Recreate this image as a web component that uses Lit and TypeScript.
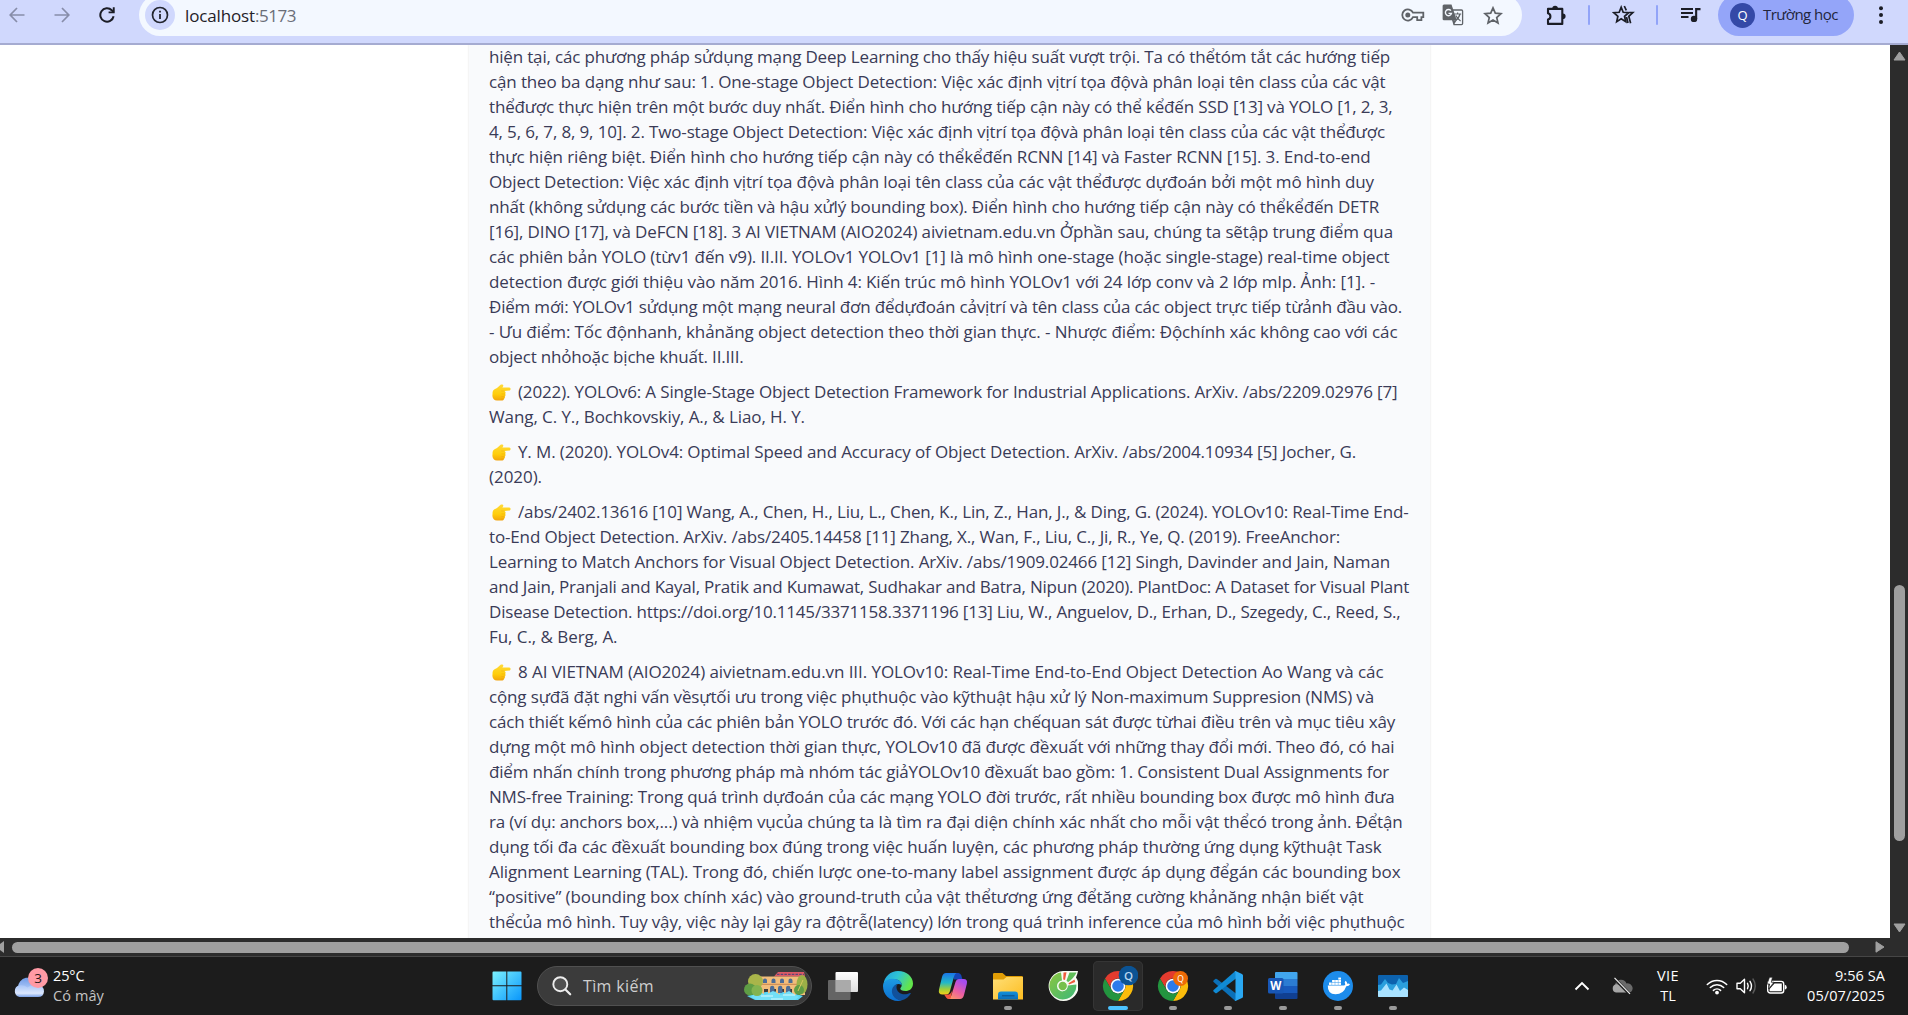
import { LitElement, html, svg, css } from "lit";
import { customElement, property } from "lit/decorators.js";

/** One line of text whose tracking is adjusted so that it spans a given width. */
@customElement("fit-text")
class FitText extends LitElement {
  @property() text = "";
  @property({ type: Number }) w = 0;
  static styles = css`
    :host { display: block; white-space: pre; }
    span { display: inline-block; }
  `;
  render() {
    return html`<span>${this.text}</span>`;
  }
  updated() {
    const el = this.renderRoot.querySelector("span") as HTMLElement;
    el.style.letterSpacing = "0px";
    const natural = el.getBoundingClientRect().width;
    if (this.w && natural) {
      el.style.letterSpacing = `${(this.w - natural) / [...this.text].length}px`;
    }
  }
}

type Line = [string, number];
const LEFT = 489.5;

/** Each line carries the x coordinate at which it ends. */
const paragraphs: { pointer: boolean; lines: Line[] }[] = [
  {
    pointer: false,
    lines: [
      ["hiện tại, các phương pháp sửdụng mạng Deep Learning cho thấy hiệu suất vượt trội. Ta có thểtóm tắt các hướng tiếp", 1390.5],
      ["cận theo ba dạng như sau: 1. One-stage Object Detection: Việc xác định vịtrí tọa độvà phân loại tên class của các vật", 1386],
      ["thểđược thực hiện trên một bước duy nhất. Điển hình cho hướng tiếp cận này có thể kểđến SSD [13] và YOLO [1, 2, 3,", 1393],
      ["4, 5, 6, 7, 8, 9, 10]. 2. Two-stage Object Detection: Việc xác định vịtrí tọa độvà phân loại tên class của các vật thểđược", 1385.5],
      ["thực hiện riêng biệt. Điển hình cho hướng tiếp cận này có thểkểđến RCNN [14] và Faster RCNN [15]. 3. End-to-end", 1371],
      ["Object Detection: Việc xác định vịtrí tọa độvà phân loại tên class của các vật thểđược dựđoán bởi một mô hình duy", 1374.5],
      ["nhất (không sửdụng các bước tiền và hậu xửlý bounding box). Điển hình cho hướng tiếp cận này có thểkểđến DETR", 1379.5],
      ["[16], DINO [17], và DeFCN [18]. 3 AI VIETNAM (AIO2024) aivietnam.edu.vn Ởphần sau, chúng ta sẽtập trung điểm qua", 1393.5],
      ["các phiên bản YOLO (từv1 đến v9). II.II. YOLOv1 YOLOv1 [1] là mô hình one-stage (hoặc single-stage) real-time object", 1390],
      ["detection được giới thiệu vào năm 2016. Hình 4: Kiến trúc mô hình YOLOv1 với 24 lớp conv và 2 lớp mlp. Ảnh: [1]. -", 1375.5],
      ["Điểm mới: YOLOv1 sửdụng một mạng neural đơn đểdựđoán cảvịtrí và tên class của các object trực tiếp từảnh đầu vào.", 1402.5],
      ["- Ưu điểm: Tốc độnhanh, khảnăng object detection theo thời gian thực. - Nhược điểm: Độchính xác không cao với các", 1398],
      ["object nhỏhoặc bịche khuất. II.III.", 744],
    ],
  },
  {
    pointer: true,
    lines: [
      ["(2022). YOLOv6: A Single-Stage Object Detection Framework for Industrial Applications. ArXiv. /abs/2209.02976 [7]", 1398],
      ["Wang, C. Y., Bochkovskiy, A., & Liao, H. Y.", 805.5],
    ],
  },
  {
    pointer: true,
    lines: [
      ["Y. M. (2020). YOLOv4: Optimal Speed and Accuracy of Object Detection. ArXiv. /abs/2004.10934 [5] Jocher, G.", 1356.5],
      ["(2020).", 542.5],
    ],
  },
  {
    pointer: true,
    lines: [
      ["/abs/2402.13616 [10] Wang, A., Chen, H., Liu, L., Chen, K., Lin, Z., Han, J., & Ding, G. (2024). YOLOv10: Real-Time End-", 1409],
      ["to-End Object Detection. ArXiv. /abs/2405.14458 [11] Zhang, X., Wan, F., Liu, C., Ji, R., Ye, Q. (2019). FreeAnchor:", 1340.5],
      ["Learning to Match Anchors for Visual Object Detection. ArXiv. /abs/1909.02466 [12] Singh, Davinder and Jain, Naman", 1390.5],
      ["and Jain, Pranjali and Kayal, Pratik and Kumawat, Sudhakar and Batra, Nipun (2020). PlantDoc: A Dataset for Visual Plant", 1409.5],
      ["Disease Detection. https://doi.org/10.1145/3371158.3371196 [13] Liu, W., Anguelov, D., Erhan, D., Szegedy, C., Reed, S.,", 1401],
      ["Fu, C., & Berg, A.", 618],
    ],
  },
  {
    pointer: true,
    lines: [
      ["8 AI VIETNAM (AIO2024) aivietnam.edu.vn III. YOLOv10: Real-Time End-to-End Object Detection Ao Wang và các", 1384],
      ["cộng sựđã đặt nghi vấn vềsựtối ưu trong việc phụthuộc vào kỹthuật hậu xử lý Non-maximum Suppresion (NMS) và", 1374.5],
      ["cách thiết kếmô hình của các phiên bản YOLO trước đó. Với các hạn chếquan sát được từhai điều trên và mục tiêu xây", 1395.5],
      ["dựng một mô hình object detection thời gian thực, YOLOv10 đã được đềxuất với những thay đổi mới. Theo đó, có hai", 1395],
      ["điểm nhấn chính trong phương pháp mà nhóm tác giảYOLOv10 đềxuất bao gồm: 1. Consistent Dual Assignments for", 1389.5],
      ["NMS-free Training: Trong quá trình dựđoán của các mạng YOLO đời trước, rất nhiều bounding box được mô hình đưa", 1395],
      ["ra (ví dụ: anchors box,...) và nhiệm vụcủa chúng ta là tìm ra đại diện chính xác nhất cho mỗi vật thểcó trong ảnh. Đểtận", 1403],
      ["dụng tối đa các đềxuất bounding box đúng trong việc huấn luyện, các phương pháp thường ứng dụng kỹthuật Task", 1382],
      ["Alignment Learning (TAL). Trong đó, chiến lược one-to-many label assignment được áp dụng đểgán các bounding box", 1401],
      ["“positive” (bounding box chính xác) vào ground-truth của vật thểtương ứng đểtăng cường khảnăng nhận biết vật", 1364],
      ["thểcủa mô hình. Tuy vậy, việc này lại gây ra độtrễ(latency) lớn trong quá trình inference của mô hình bởi việc phụthuộc", 1405],
    ],
  },
];

const hand = html`<svg class="hand" width="19" height="17" viewBox="0 0 19 17">
  <defs><linearGradient id="hg" x1="0" y1="0" x2="0" y2="1">
    <stop offset="0" stop-color="#ffd93a" /><stop offset=".6" stop-color="#ffce0b" /><stop offset="1" stop-color="#f3a40c" />
  </linearGradient></defs>
  <path fill="url(#hg)" d="M.6 8C1 5.700 3 4.800 5 3.900L8.600.8C9.500.1 11.600.4 11.300 1.900L10.400 3.400 17.300 3.500C19 3.600 19 6.500 17.300 6.600L12.500 6.900C13.800 7.600 13.900 9.200 13.100 9.800 13.800 10.700 13.500 12 12.700 12.500 13.200 13.500 12.700 14.600 11.900 14.900 11.800 16.200 10.800 16.600 9.600 16.600H5C2.200 16.600.6 14.500.4 12Z" />
  <path fill="none" stroke="#e79a08" stroke-width=".7" d="M9.200 7H12.500M9.400 9.900H13M9.200 12.600H12.600M8.900 15H11.800" opacity=".5" />
</svg>`;

const backIcon = html`<svg width="16" height="16" viewBox="0 0 16 16"><path d="M15.500 8H1.500M8 1 1.200 8 8 15" fill="none" stroke="#878da9" stroke-width="1.700" /></svg>`;
const forwardIcon = html`<svg width="16" height="16" viewBox="0 0 16 16"><path d="M.5 8H14.500M8 1 14.800 8 8 15" fill="none" stroke="#878da9" stroke-width="1.700" /></svg>`;
const reloadIcon = html`<svg width="16" height="16" viewBox="0 0 16 16"><path d="M14.600 9.300A6.700 6.700 0 1 1 12.800 3.300L14.600 5" fill="none" stroke="#1b1d26" stroke-width="2" /><path d="M15.700.3V6.300H9.600V4.500H13.800V.3Z" fill="#1b1d26" /></svg>`;
const infoIcon = html`<svg width="18" height="18" viewBox="0 0 18 18"><circle cx="9" cy="9" r="7.500" fill="none" stroke="#22252e" stroke-width="1.700" /><path d="M9 7.900V13M9 4.800V6.500" stroke="#22252e" stroke-width="1.800" /></svg>`;
const keyIcon = html`<svg width="24" height="14" viewBox="0 0 24 14"><g fill="none" stroke="#5f6368" stroke-width="1.800"><path d="M12 4.700H22.300V9.200H20.400V12.100H16.200V9.200H12A5.600 5.600 0 1 1 12 4.700Z" /></g><circle cx="6.800" cy="7" r="2.500" fill="#5f6368" /></svg>`;
const translateIcon = html`<svg width="22" height="22" viewBox="0 0 22 22">
  <path d="M8 6H19.500Q20.600 6 20.600 7V19.500Q20.600 20.600 19.500 20.600H12Z" fill="#f3f8ff" stroke="#5f6368" stroke-width="1.300" />
  <path d="M2 .5H9.500L14.800 16.300H2Q.6 16.300.6 15V2Q.6.500 2 .5Z" fill="#5f6368" />
  <path d="M10.500 16.300H14.800L12 20.600Z" fill="#5f6368" />
  <path d="M8.900 6.600A3.100 3.100 0 1 0 9.500 9.400H6.500" fill="none" stroke="#f3f8ff" stroke-width="1.400" />
  <path d="M12.300 10H19.200M15.600 8.500V10M18 10Q17 14.300 13.500 16.500M13.800 11.500Q15.500 15 18.600 17" fill="none" stroke="#5f6368" stroke-width="1.200" />
</svg>`;
const starIcon = html`<svg width="20" height="19" viewBox="0 0 20 19"><path d="M10 1.900 12.300 7.200 18 7.700 13.700 11.500 15 17.100 10 14.100 5 17.100 6.300 11.500 2 7.700 7.700 7.200Z" fill="none" stroke="#5f6368" stroke-width="1.700" /></svg>`;
const puzzleIcon = html`<svg width="21" height="21" viewBox="0 0 21 21"><path d="M2 3.900H16.300V18.900H2V14.500A3.200 3.200 0 0 0 2 8.300Z" fill="none" stroke="#1b1d26" stroke-width="2.100" stroke-linejoin="round" /><path d="M6.300 3.500A2.800 2.800 0 0 1 11.900 3.500ZM16.800 8.500A2.800 2.800 0 0 1 16.800 14.100Z" fill="#1b1d26" /></svg>`;
const tabStarIcon = html`<svg width="23" height="20" viewBox="0 0 23 20"><path d="M9.200 2.200 11.200 7.300 16.700 7.700 12.500 11.300 13.700 16.600 9.200 13.700 4.700 16.600 5.900 11.300 1.700 7.700 7.200 7.300ZM12.300 1 14.300 5.300M17.500 7.500H20.800L16.800 11.300 18.600 18.300M14.500 12 16 18" fill="none" stroke="#1b1d26" stroke-width="1.700" /></svg>`;
const musicIcon = html`<svg width="20" height="16" viewBox="0 0 20 16"><path d="M0 2H12M0 6H12M0 10H7.500" stroke="#1b1d26" stroke-width="2" /><path d="M14.100 1H19.500V3.200H16.200V12H14.100Z" fill="#1b1d26" /><circle cx="13" cy="11.900" r="3.200" fill="#1b1d26" /></svg>`;
const dotsIcon = html`<svg width="4" height="18" viewBox="0 0 4 18"><g fill="#1b1d26"><circle cx="2" cy="2.200" r="2" /><circle cx="2" cy="9" r="2" /><circle cx="2" cy="15.900" r="2" /></g></svg>`;

const weatherIcon = html`<svg width="36" height="32" viewBox="0 0 36 32">
  <defs><linearGradient id="wc" x1="0" y1="0" x2="0" y2="1"><stop offset="0" stop-color="#6f9be6" /><stop offset="1" stop-color="#b9d0fa" /></linearGradient>
  <linearGradient id="wf" x1="0" y1="0" x2="0" y2="1"><stop offset="0" stop-color="#a5c3f7" /><stop offset=".7" stop-color="#dbe7fd" /><stop offset="1" stop-color="#79a1e8" /></linearGradient></defs>
  <path d="M5 20A10 9.500 0 0 1 24 16L24 24H6Z" fill="url(#wc)" />
  <path d="M6.500 30A6 6 0 0 1 6.500 18.300Q11 17.500 14.500 20.500 18 17 24 17.800 31 18.500 31 24.500 30.500 30 25 30Z" fill="url(#wf)" />
  <circle cx="25" cy="11" r="10" fill="#ff9aa5" />
  <text x="25" y="15.800" text-anchor="middle" font-family="Open Sans, sans-serif" font-size="13.500" fill="#28181a">3</text>
</svg>`;
const startIcon = html`<svg width="30" height="30" viewBox="0 0 30 30"><defs><linearGradient id="st" x1="0" y1="0" x2="29" y2="29" gradientUnits="userSpaceOnUse"><stop offset="0" stop-color="#7df3ff" /><stop offset="1" stop-color="#0a97fb" /></linearGradient></defs><path fill="url(#st)" d="M1.500.5H14.300V14.300H.5V1.500Q.5.500 1.500.5ZM15.300.5H28.500Q29.500.5 29.500 1.500V14.300H15.300ZM.5 15.300H14.300V29.300H1.500Q.5 29.300.5 28.300ZM15.300 15.300H29.500V28.300Q29.500 29.300 28.500 29.300H15.300Z" /></svg>`;
const searchIcon = html`<svg width="20" height="20" viewBox="0 0 20 20"><circle cx="8.300" cy="8.200" r="7" fill="#505050" stroke="#ececec" stroke-width="1.900" /><path d="M13.400 13.500 18.200 18.300" stroke="#ececec" stroke-width="2.200" stroke-linecap="round" /></svg>`;
const viaductIcon = html`<svg width="66" height="30" viewBox="0 0 66 30">
  <path d="M4 25Q32 16 60 25L55 29H12Z" fill="#5ad6f4" />
  <path d="M35 1H61L62 5.500H31Z" fill="#dd5a66" /><path d="M34 3.300H61" stroke="#5e4777" stroke-width="1.300" stroke-dasharray="2.500 1.200" />
  <path d="M15 5.500H62V24H57V18H53V24H49V18H45V24H41V18H37V24H33V18H29V24H25V18H21V24H15Z" fill="#f2bd7b" />
  <g fill="#4c6d96"><path d="M20 12V9.500A2 2 0 0 1 24 9.500V12ZM28.500 12V9.500A2 2 0 0 1 32.500 9.500V12ZM37 12V9.500A2 2 0 0 1 41 9.500V12ZM45.500 12V9.500A2 2 0 0 1 49.500 9.500V12Z" /><path d="M27 23V17A2.200 2.200 0 0 1 31.400 17V23ZM35 22V17A2.200 2.200 0 0 1 39.400 17V22ZM43 22V17A2.200 2.200 0 0 1 47.400 17V22Z" /></g>
  <path d="M15 13.300H58" stroke="#c98550" stroke-width="1" />
  <path d="M8 26 15 19 22 24 30 20 38 24 46 20 56 26 52 29H14Z" fill="#73e0f7" /><path d="M18 25H30M28 28H40M40 24H52" stroke="#d5faff" stroke-width="1.200" />
  <circle cx="12.500" cy="10.500" r="7.500" fill="#a9b54a" /><circle cx="7" cy="18.500" r="6" fill="#5f9d45" /><circle cx="14" cy="19.500" r="5.500" fill="#83b350" />
  <ellipse cx="59" cy="13.500" rx="5.500" ry="9.500" fill="#9bb047" /><circle cx="56" cy="19" r="5" fill="#5f9d45" /><path d="M55 20 60 9" stroke="#d5c75f" stroke-width="1" />
</svg>`;
const taskViewIcon = html`<svg width="30" height="30" viewBox="0 0 30 30"><defs><linearGradient id="tv" x1="0" y1="0" x2="0" y2="1"><stop stop-color="#fff" /><stop offset="1" stop-color="#dedede" /></linearGradient></defs><rect x="7.500" y="1" width="22.500" height="20" rx="1" fill="url(#tv)" /><rect x="0" y="9" width="22.500" height="20" rx="1" fill="#717171" opacity=".85" /><rect x="7.500" y="9" width="15" height="12" fill="#aaa" /></svg>`;
const edgeIcon = html`<svg width="30" height="30" viewBox="0 0 30 30"><defs><linearGradient id="e1" x1="0" y1="0" x2="1" y2=".4"><stop stop-color="#1f9fe0" /><stop offset=".5" stop-color="#2fc4d6" /><stop offset="1" stop-color="#62e54c" /></linearGradient><linearGradient id="e2" x1="0" y1="0" x2="0" y2="1"><stop stop-color="#1d9be4" /><stop offset="1" stop-color="#0c6fd0" /></linearGradient></defs>
  <path d="M.5 13A14.700 14.700 0 0 1 15 0C24 0 30 6 30 12.500 30 17.500 26.500 20 22.500 20 19 20 17.300 18.800 17.300 17.700 17.300 16.800 18.700 16.300 18.700 14 18.700 11 15.500 8.500 11.500 8.300 6 8 2 10.500.5 13Z" fill="url(#e1)" />
  <path d="M0 15C0 10 5 7.700 10 7.700 15.500 7.700 18.700 10.800 18.700 14 14.500 11 10 14.500 10 19.500 10 25 14.500 29.500 19 29.300 17.800 29.800 16.500 30 15 30 6.500 30 0 23.500 0 15Z" fill="url(#e2)" />
  <path d="M14.300 13.200C10 14.500 8.500 18 9 21.500 9.800 26.500 14.500 29.700 19 29.300 23 28.500 26 25.500 27.800 22.600 28.100 22 27.600 21.700 27 22 20 25.500 13.500 21.500 13.500 16.500 13.500 15 13.800 14 14.300 13.200Z" fill="#11519b" /></svg>`;
const copilotIcon = html`<svg width="30" height="30" viewBox="0 0 30 30"><defs>
  <linearGradient id="c1" x1="0" y1="0" x2="0" y2="1"><stop stop-color="#1a75e8" /><stop offset=".45" stop-color="#22b8c8" /><stop offset=".75" stop-color="#9fce3a" /><stop offset="1" stop-color="#f4cf18" /></linearGradient>
  <linearGradient id="c2" x1=".6" y1="0" x2="0" y2="1"><stop stop-color="#a54cf0" /><stop offset=".5" stop-color="#ec5fa0" /><stop offset="1" stop-color="#ffa35a" /></linearGradient></defs>
  <path d="M14 2H20.500Q22.500 2 23.300 4.500L24.500 8.500H16Z" fill="#1545b8" />
  <path d="M8 2H18.500Q16.800 2.600 16 5.500L12 20Q11 23.500 8 23.500H4.500Q0 23.500 1 18.500L4 6Q5 2 8 2Z" fill="url(#c1)" />
  <path d="M22 28H9Q12.500 27.500 13.500 24L17.500 11Q18.500 8 21 8H25.500Q30 8 28.800 13L26 24Q25 28 22 28Z" fill="url(#c2)" />
  <path d="M6 23.500H11Q13.500 22 14.500 19L12.500 27.500Q10 28.500 8.500 27Z" fill="#f3543f" /></svg>`;
const explorerIcon = html`<svg width="30" height="30" viewBox="0 0 30 30"><defs><linearGradient id="f1" x1="0" y1="0" x2="1" y2="1"><stop stop-color="#ffdf77" /><stop offset="1" stop-color="#fdbd20" /></linearGradient><linearGradient id="f2" x1="0" y1="0" x2="0" y2="1"><stop stop-color="#1190db" /><stop offset="1" stop-color="#0b6db8" /></linearGradient></defs>
  <path d="M0 3.300Q0 2 1.300 2H9.500L13 5H28.700Q30 5 30 6.300V12H0Z" fill="#e09d05" /><path d="M0 8.500H10.500L13.500 6H30V28.500H0Z" fill="url(#f1)" /><path d="M5 28.500V23.500Q5 20.500 8 20.500H22Q25 20.500 25 23.500V28.500Z" fill="url(#f2)" /><path d="M9 24.800H21.500" stroke="#0a4d88" stroke-width="1" /></svg>`;
const leafIcon = html`<svg width="30" height="30" viewBox="0 0 30 30"><defs><linearGradient id="l1" x1="0" y1="0" x2="1" y2="1"><stop stop-color="#8cc63f" /><stop offset="1" stop-color="#3cb878" /></linearGradient></defs>
  <path d="M15 0H30Q29.500 3 28 6.500A15 15 0 1 1 15 0Z" fill="#f7fbf3" />
  <path d="M13 1.500A13.500 13.500 0 1 0 28.300 13.500L19.800 14.500A5.400 5.400 0 1 1 14 9.600Z" fill="url(#l1)" />
  <circle cx="14.700" cy="15" r="4.200" fill="#76c04b" />
  <path d="M15.200 8.500 15.500 1.500 18.500 1.200 17 9Z M20.500 12.300 26.500 8.500 27.200 11 21 13.500Z" fill="#ef5b3d" /><path d="M18.500 9.500 21.500 1.500H28.500Q26 7 20 11.300Z" fill="#5fbd58" /></svg>`;
const chrome = (badge: unknown) => html`<svg class="badged" width="40" height="40" viewBox="-5 -5 40 40">
  <g transform="scale(.625)"><path fill="#e33b2e" d="M3.200 12A24 24 0 0 1 44.800 12L24 12A12 12 0 0 0 13.600 30Z" /><path fill="#fbbc0b" d="M44.800 12A24 24 0 0 1 24 48L34.400 30A12 12 0 0 0 24 12Z" /><path fill="#23953f" d="M24 48A24 24 0 0 1 3.200 12L13.600 30A12 12 0 0 0 34.400 30Z" /><circle cx="24" cy="24" r="11.800" fill="#fff" /><circle cx="24" cy="24" r="9.300" fill="#2d7bec" /></g>${badge}</svg>`;
const blueBadge = svg`<circle cx="25.500" cy="4.500" r="9.800" fill="#0b5394" /><text x="25.500" y="8.500" text-anchor="middle" font-family="Open Sans, sans-serif" font-weight="600" font-size="11.500" fill="#b9d7ef">Q</text>`;
const orangeBadge = svg`<circle cx="22.500" cy="7.500" r="7.500" fill="#ee6a06" /><text x="22.500" y="10.500" text-anchor="middle" font-family="Open Sans, sans-serif" font-size="8.500" fill="#fff">Q</text>`;
const codeIcon = html`<svg width="30" height="30" viewBox="0 0 30 30"><path d="M.3 9.800 2.200 8Q3 7.400 3.900 8L23 22.500V29.500L21.800 29.500.3 10.800Z" fill="#0b70b8" /><path d="M.3 20.200 2.200 22Q3 22.600 3.900 22L23 7.500V.5L21.800.5.3 19.200Z" fill="#108ad4" /><path d="M21.500.3 22.500 0 29 3Q30 3.500 30 4.600V25.400Q30 26.500 29 27L22.500 30 21.500 29.700Q22.500 29.700 22.500 28V2Q22.500.8 21.500.3Z" fill="#2aa8f2" /></svg>`;
const wordIcon = html`<svg width="30" height="30" viewBox="0 0 30 30"><path d="M7 2Q7 1 8 1H28.500Q29.500 1 29.500 2V8H7Z" fill="#41a5ee" /><path d="M7 8H29.500V15H7Z" fill="#2b7cd3" /><path d="M7 15H29.500V22H7Z" fill="#185abd" /><path d="M7 22H29.500V27Q29.500 28 28.500 28H8Q7 28 7 27Z" fill="#103f91" /><rect x="0" y="7" width="15.500" height="15.500" rx="1.500" fill="#1857b6" /><text x="7.700" y="18.800" text-anchor="middle" font-family="Open Sans, sans-serif" font-weight="700" font-size="11.500" fill="#fff">W</text></svg>`;
const dockerIcon = html`<svg width="30" height="30" viewBox="0 0 30 30"><circle cx="15" cy="15" r="15" fill="#1d8ceb" /><path d="M4.800 14.500H20.700Q22 14.300 22.300 13.500 21 11.500 22.500 9.800 24.200 11 24.200 12.700 25.800 12.400 27 13.200 26 15.300 23.300 15.200 20.500 23.300 12.500 23.300 4.500 23.300 4.800 14.500Z" fill="#fff" /><g fill="#fff"><rect x="6" y="11.500" width="2.700" height="2.400" /><rect x="9.100" y="11.500" width="2.700" height="2.400" /><rect x="12.200" y="11.500" width="2.700" height="2.400" /><rect x="15.300" y="11.500" width="2.700" height="2.400" /><rect x="9.100" y="9" width="2.700" height="2.100" /><rect x="12.200" y="9" width="2.700" height="2.100" /><rect x="15.300" y="9" width="2.700" height="2.100" /><rect x="15.300" y="6.600" width="2.700" height="2" /></g></svg>`;
const monitorIcon = html`<svg width="30" height="30" viewBox="0 0 30 30"><rect y="4" width="30" height="22" rx="1" fill="#0c62ae" /><path d="M0 14 3 13.500 7 8 10 12 14 13.500 18 13 21 7 25 12 30 10V25Q30 26 29 26H1Q0 26 0 25Z" fill="#2a9fdd" /><path d="M0 20 3 19.500 8.500 12.500 11.500 18.500 14.500 19.500 18.500 13.500 22 20 26 16.500 30 19V25Q30 26 29 26H1Q0 26 0 25Z" fill="#a9e2ff" /></svg>`;

const chevronIcon = html`<svg width="16" height="10" viewBox="0 0 16 10"><path d="M1.500 8.500 8 2 14.500 8.500" fill="none" stroke="#fff" stroke-width="1.900" /></svg>`;
const cloudOffIcon = html`<svg width="22" height="18" viewBox="0 0 22 18"><path d="M4 8A6 6 0 0 1 15.500 6.500 5 5 0 0 1 20 15H5Z" fill="#6a6a6a" /><path d="M5 15.500A4.200 4.200 0 0 1 5 7.300Q8 6.800 11 10L18 15.500Z" fill="#a6a6a6" /><path d="M3 1 18.500 17" stroke="#1c1c1c" stroke-width="3" /><path d="M3.500.8 19 16.800" stroke="#eee" stroke-width="1.200" /></svg>`;
const wifiIcon = html`<svg width="22" height="17" viewBox="0 0 22 17"><g fill="none" stroke="#fff" stroke-width="1.500" stroke-linecap="round"><path d="M1.300 6.500A13.600 13.600 0 0 1 20.700 6.500" /><path d="M4.300 9.500A9.400 9.400 0 0 1 17.700 9.500" /><path d="M7.400 12.400A5.200 5.200 0 0 1 14.600 12.400" /></g><circle cx="11" cy="14.600" r="1.900" fill="#fff" /></svg>`;
const volumeIcon = html`<svg width="22" height="18" viewBox="0 0 22 18"><g fill="none" stroke="#fff" stroke-width="1.400" stroke-linejoin="round" stroke-linecap="round"><path d="M1 6.300H4.300L8.500 2.300V15.700L4.300 11.700H1Z" /><path d="M11.500 6.300Q13 9 11.500 11.700M14 4.300Q17 9 14 13.700" /><path d="M17 2Q21.500 9 17 16" stroke="#5a5a5a" /></g></svg>`;
const batteryIcon = html`<svg width="22" height="18" viewBox="0 0 22 18"><rect x="1.700" y="4.400" width="16" height="11.600" rx="2.500" fill="none" stroke="#fff" stroke-width="1.400" /><path d="M3.600 14.300V12L8.500 6.500H15.800V14.300Z" fill="#fff" /><path d="M18.800 7.800Q20.700 8 20.700 10.200 20.700 12.400 18.800 12.600Z" fill="#fff" /><path d="M3.500.2 1 7H3.600L2.600 12 8 5.200H5.300L6.500.2Z" fill="#fff" stroke="#1c1c1c" stroke-width=".7" /></svg>`;

const apps: { icon: unknown; state: "" | "open" | "active" }[] = [
  { icon: taskViewIcon, state: "" },
  { icon: edgeIcon, state: "" },
  { icon: copilotIcon, state: "" },
  { icon: explorerIcon, state: "open" },
  { icon: leafIcon, state: "" },
  { icon: chrome(blueBadge), state: "active" },
  { icon: chrome(orangeBadge), state: "open" },
  { icon: codeIcon, state: "open" },
  { icon: wordIcon, state: "open" },
  { icon: dockerIcon, state: "open" },
  { icon: monitorIcon, state: "open" },
];

@customElement("app-root")
class AppRoot extends LitElement {
  static styles = css`
    :host { display: block; width: 1908px; height: 1015px; overflow: hidden; font-family: "Open Sans", "Noto Sans", sans-serif; }
    * { box-sizing: border-box; }
    svg { display: block; flex: none; }
    .screen { display: flex; flex-direction: column; height: 1015px; background: #fff; }

    .toolbar { display: flex; align-items: flex-start; height: 45px; flex: none; overflow: hidden; background: #d0d8fd; border-bottom: 2px solid #a5abd1; }
    .row { display: flex; align-items: center; height: 42px; margin-top: -6px; flex: none; }
    .nav { gap: 29px; padding-left: 9px; width: 139px; }
    .omnibox { width: 1383px; border-radius: 21px; background: #f3f8ff; padding-left: 6px; font-size: 17px; color: #1f2128; }
    .site { display: flex; align-items: center; justify-content: center; width: 30px; height: 30px; border-radius: 50%; background: #d0d8fd; margin-right: 10px; }
    .port { color: #6a6e78; }
    .key { margin-left: auto; }
    .translate { margin-left: 17px; }
    .bookmark { margin: 0 19px 0 19px; }
    .puzzle { margin-left: 24px; }
    .sep { width: 2px; height: 20px; background: #92a4f8; border-radius: 1px; }
    .puzzle + .sep { margin: 0 22px 0 21px; }
    .tabstar + .sep { margin: 0 23px 0 21px; }
    .profile { display: flex; align-items: center; height: 42px; width: 136px; border-radius: 21px; background: #94a5f9; margin: 0 25px 0 17px; padding-left: 12px; gap: 8px; font-size: 15px; color: #22263c; }
    .avatar { display: flex; align-items: center; justify-content: center; width: 25px; height: 25px; border-radius: 50%; background: #3449a7; color: #fff; font-size: 13px; }
    .name { margin-top: -2px; }

    .viewport { display: flex; height: 893px; flex: none; }
    .page { flex: 1; display: flex; overflow: hidden; height: 893px; padding-left: 469px; }
    .card { width: 960.500px; height: 930px; margin-top: -1px; padding-left: 20px; background: #f9fafc; box-shadow: 0 0 2px rgba(0, 0, 0, 0.12); font-size: 17px; line-height: 25px; color: #3a3b57; }
    .para { margin-bottom: 10px; }
    .line { display: flex; height: 25px; }
    .hand { margin: 5px 7.500px 0 2.500px; }

    .vbar { display: flex; flex-direction: column; align-items: center; justify-content: space-between; width: 18px; padding: 6px 0 5px; background: #2c2c2c; }
    .track { flex: 1; padding-top: 524px; }
    .vthumb { width: 11px; height: 256px; border-radius: 6px; background: #9f9f9f; }
    .hbar { display: flex; align-items: center; height: 19px; flex: none; background: #2c2c2c; border-bottom: 1px solid #464646; }
    .hthumb { width: 1837px; height: 11px; border-radius: 6px; background: #9f9f9f; margin: 0 26px 0 8px; }

    .taskbar { display: flex; align-items: center; height: 58px; flex: none; background: #1c1c1c; color: #fff; font-size: 14.500px; line-height: 20px; }
    .weather { display: flex; width: 482px; padding-left: 13px; gap: 4px; flex: none; }
    .weather svg { margin-top: 1px; }
    .cond { color: #c4c4c4; }
    .cell { display: flex; flex-direction: column; align-items: center; width: 50px; height: 50px; padding-top: 10px; border-radius: 5px; margin-right: 5px; flex: none; }
    .badged { margin: -5px 0; }
    .active { background: #2a2a2a; box-shadow: inset 0 0 0 1px #353535; }
    .open::after, .active::after { content: ""; width: 8px; height: 4px; margin-top: 5px; border-radius: 2px; background: #9a9a9a; }
    .active::after { width: 20px; background: #4cc2ff; }
    .search { display: flex; align-items: center; width: 275px; height: 40px; border-radius: 20px; background: #3b3b3b; border: 1px solid #505050; padding: 0 2px 0 14px; margin-right: 6px; color: #cfcfcf; font-size: 16px; flex: none; }
    .query { margin: 0 auto 0 11px; }
    .tray { display: flex; align-items: center; flex: 1; padding: 0 23px 0 151px; }
    .cloud { margin-left: 21px; }
    .lang { width: 30px; margin: 0 23px 0 20px; display: flex; flex-direction: column; align-items: center; }
    .vol { margin: 0 8px; }
    .clock { margin-left: auto; display: flex; flex-direction: column; align-items: flex-end; }
  `;

  render() {
    return html`<div class="screen">
      <div class="toolbar">
        <div class="row nav">${backIcon}${forwardIcon}${reloadIcon}</div>
        <div class="row omnibox">
          <div class="site">${infoIcon}</div>
          <fit-text text="localhost" .w=${70}></fit-text><fit-text class="port" text=":5173" .w=${41}></fit-text>
          <div class="key">${keyIcon}</div>
          <div class="translate">${translateIcon}</div>
          <div class="bookmark">${starIcon}</div>
        </div>
        <div class="row">
          <div class="puzzle">${puzzleIcon}</div><div class="sep"></div>
          <div class="tabstar">${tabStarIcon}</div><div class="sep"></div>
          <div>${musicIcon}</div>
          <div class="profile"><div class="avatar">Q</div><fit-text class="name" text="Trường học" .w=${75}></fit-text></div>
          ${dotsIcon}
        </div>
      </div>
      <div class="viewport">
        <div class="page">
          <div class="card">
            ${paragraphs.map(
              (p) => html`<div class="para">
                ${p.lines.map(([t, end], i) => {
                  const lead = p.pointer && i === 0;
                  return html`<div class="line">${lead ? hand : ""}<fit-text .text=${t} .w=${end - LEFT - (lead ? 29 : 0)}></fit-text></div>`;
                })}
              </div>`
            )}
          </div>
        </div>
        <div class="vbar">
          <svg width="13" height="10" viewBox="0 0 13 10"><path d="M6.500 1 12 9H1Z" fill="#9f9f9f" stroke="#9f9f9f" stroke-linejoin="round" /></svg>
          <div class="track"><div class="vthumb"></div></div>
          <svg width="13" height="10" viewBox="0 0 13 10"><path d="M6.500 9 12 1H1Z" fill="#9f9f9f" stroke="#9f9f9f" stroke-linejoin="round" /></svg>
        </div>
      </div>
      <div class="hbar">
        <svg width="4" height="12" viewBox="0 0 4 12"><path d="M4 0V12L0 9V3Z" fill="#9f9f9f" /></svg>
        <div class="hthumb"></div>
        <svg width="10" height="12" viewBox="0 0 10 12"><path d="M1 .8 9 6 1 11.200Z" fill="#9f9f9f" stroke="#9f9f9f" stroke-linejoin="round" /></svg>
      </div>
      <div class="taskbar">
        <div class="weather">${weatherIcon}
          <div><fit-text text="25°C" .w=${31.5}></fit-text><fit-text class="cond" text="Có mây" .w=${51}></fit-text></div>
        </div>
        <div class="cell">${startIcon}</div>
        <div class="search">${searchIcon}<fit-text class="query" text="Tìm kiếm" .w=${71}></fit-text>${viaductIcon}</div>
        ${apps.map((a) => html`<div class="cell ${a.state}">${a.icon}</div>`)}
        <div class="tray">
          ${chevronIcon}
          <div class="cloud">${cloudOffIcon}</div>
          <div class="lang"><fit-text text="VIE" .w=${22}></fit-text><fit-text text="TL" .w=${15.5}></fit-text></div>
          ${wifiIcon}
          <div class="vol">${volumeIcon}</div>
          ${batteryIcon}
          <div class="clock"><fit-text text="9:56 SA" .w=${50}></fit-text><fit-text text="05/07/2025" .w=${78}></fit-text></div>
        </div>
      </div>
    </div>`;
  }
}
